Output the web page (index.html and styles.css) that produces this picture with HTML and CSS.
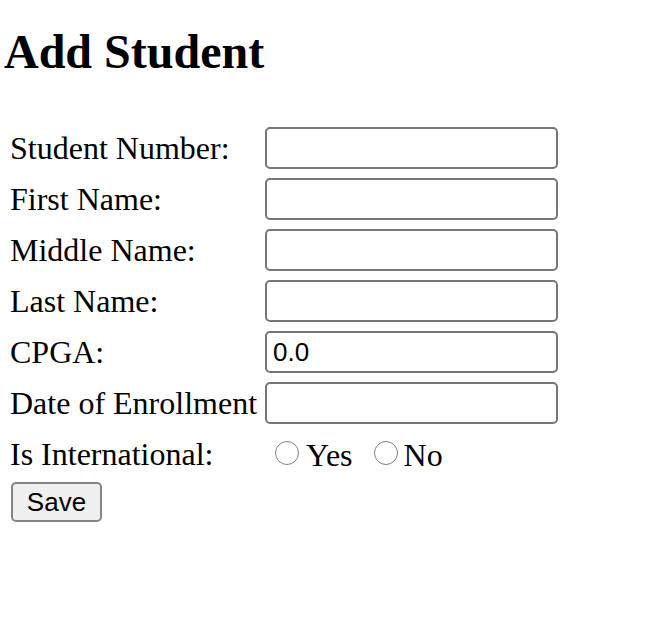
FILE: index.html
```html
<!DOCTYPE html>
<html lang="en">
<head>
<meta charset="utf-8">
<title>Add Student</title>
<link rel="stylesheet" href="styles.css">
</head>
<body>
<h1 class="title">Add Student</h1>
<form class="form">
  <label class="label" for="num">Student Number:</label>
  <input class="field" id="num" type="text">
  <label class="label" for="first">First Name:</label>
  <input class="field" id="first" type="text">
  <label class="label" for="middle">Middle Name:</label>
  <input class="field" id="middle" type="text">
  <label class="label" for="last">Last Name:</label>
  <input class="field" id="last" type="text">
  <label class="label" for="cpga">CPGA:</label>
  <input class="field" id="cpga" type="text" value="0.0">
  <label class="label" for="date">Date of Enrollment</label>
  <input class="field" id="date" type="text">
  <span class="label">Is International:</span>
  <span class="radios">
    <input class="radio" type="radio" name="intl" id="yes"><label class="radio-text" for="yes">Yes</label>
    <input class="radio radio-second" type="radio" name="intl" id="no"><label class="radio-text" for="no">No</label>
  </span>
  <span class="actions"><button class="save" type="button">Save</button></span>
</form>
</body>
</html>
```
FILE: styles.css
```css
html, body {
  margin: 0;
  padding: 0;
  background: #ffffff;
}

body {
  font-family: "Liberation Serif", "Times New Roman", serif;
  color: #000000;
}

.title {
  margin: 25px 0 0 4px;
  font-size: 48px;
  font-weight: bold;
  line-height: 53px;
}

.form {
  display: grid;
  grid-template-columns: 255px 293px;
  grid-auto-rows: 42px;
  row-gap: 9px;
  align-items: center;
  padding: 49px 0 0 10px;
}

.label {
  font-size: 32px;
  line-height: 36px;
  white-space: nowrap;
}

.field {
  box-sizing: border-box;
  width: 293px;
  height: 42px;
  margin: 0;
  padding: 0 6px;
  border: 2px solid #767676;
  border-radius: 5px;
  background: #ffffff;
  font-family: "Liberation Sans", Arial, sans-serif;
  font-size: 26px;
  color: #000000;
  outline: none;
}

.radios {
  display: flex;
  align-items: center;
  padding-bottom: 3px;
}

.radio {
  appearance: none;
  -webkit-appearance: none;
  box-sizing: border-box;
  width: 24px;
  height: 24px;
  margin: 0 7px 0 10px;
  border: 1.5px solid #808080;
  border-radius: 50%;
  background: #ffffff;
}

.radio-second {
  margin-left: 21px;
  margin-right: 6px;
}

.radio-text {
  font-size: 32px;
  line-height: 36px;
  padding-top: 5px;
}

.actions {
  grid-column: 1 / span 2;
  align-self: start;
  margin-top: -2px;
}

.save {
  box-sizing: border-box;
  width: 91px;
  height: 40px;
  margin: 0 0 0 1px;
  padding: 0;
  border: 2px solid #858585;
  border-radius: 5px;
  background: #efefef;
  font-family: "Liberation Sans", Arial, sans-serif;
  font-size: 26px;
  color: #000000;
}
```
